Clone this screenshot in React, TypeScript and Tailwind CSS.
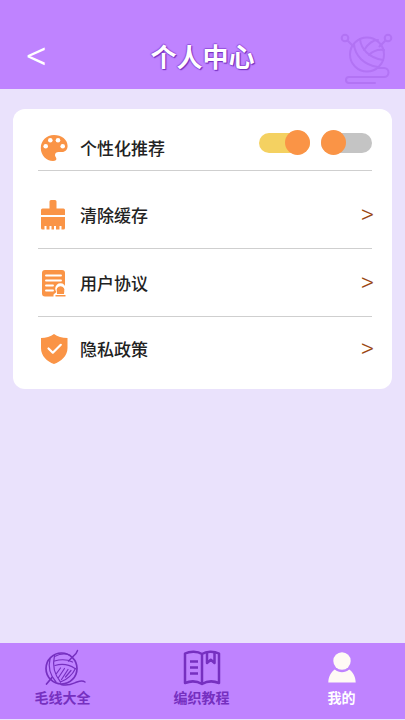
import type { ReactNode } from "react";

function KnittingMark() {
  return (
    <svg viewBox="0 0 54 54" className="w-[54px] h-[54px]" fill="none" stroke="#b273f4" strokeWidth="2" strokeLinecap="round" aria-hidden="true">
      <circle cx="5" cy="5" r="3.3" />
      <circle cx="48" cy="5" r="3.3" />
      <path d="M7.500 7.500l6 6M45.500 7.500l-6 6" />
      <circle cx="27" cy="21.500" r="17" />
      <path d="M20 6c1 10 9 19 23 21M14 11c1 12 10 21 24 23M24 17c4-6 9-10 14-10M29 22c4-4 9-6 15-5" />
      <path d="M38 35h6a4.500 4.500 0 0 1 0 9H9a3 3 0 0 0 0 6H35" />
    </svg>
  );
}

function PaletteIcon() {
  return (
    <svg viewBox="0 0 28 32" className="w-7 h-8" aria-hidden="true">
      <path fill="#fa9446" d="M14 3C6.500 3 .8 8.700.8 16S6.200 29 13 29c2.600 0 3.700-1 3.300-2.700-.3-1-1.300-2-1.300-3.300 0-2 1.500-3 3.500-3H22c3.200 0 5.600-2.300 5.600-6C27.600 7.500 21.500 3 14 3z" />
      <g fill="#fff">
        <circle cx="5.700" cy="14.300" r="2.300" />
        <circle cx="10.300" cy="8.300" r="2.300" />
        <circle cx="18" cy="8.300" r="2.300" />
        <circle cx="22.700" cy="14.300" r="2.300" />
      </g>
    </svg>
  );
}

function BrushIcon() {
  return (
    <svg viewBox="0 0 28 32" className="w-7 h-8" fill="#fa9446" aria-hidden="true">
      <path d="M9.500 9.500V2.500Q9.500 1 11 1H15Q16.500 1 16.500 2.500V9.500H23.500Q25 9.500 25 11V16H1V11Q1 9.500 2.500 9.500Z" />
      <path d="M1 18H25V29Q25 30.500 23.500 30.500H21.500V27H19.500V30.500H16V27H14V30.500H11.500V27H9.500V30.500H6.500V27H4.500V30.500H2.500Q1 30.500 1 29Z" />
    </svg>
  );
}

function AgreementIcon() {
  return (
    <svg viewBox="0 0 28 32" className="w-7 h-8" aria-hidden="true">
      <rect x="2" y="3" width="23" height="26.500" rx="3" fill="#fa9446" />
      <path d="M6 8.500H21M6 13.500H21M6 18.500H13M6 23.500H13" stroke="#fff" strokeWidth="1.900" strokeLinecap="round" />
      <path d="M13.500 32V27.500L16.500 25A5.300 5.300 0 1 1 24.500 25L27 27.500V32Z" fill="#fff" />
      <path d="M17 27V24.800A3.900 3.900 0 1 1 24 24.800V27ZM15.500 28H25.500V29.500H15.500Z" fill="#fa9446" />
    </svg>
  );
}

function ShieldIcon() {
  return (
    <svg viewBox="0 0 28 32" className="w-7 h-8" aria-hidden="true">
      <path fill="#fa9446" d="M14 1C17.500 3.800 22 4.800 27.500 5V15C27.500 23 21 28.500 14 31C7 28.500 1 23 1 15V5C6 4.800 10.500 3.800 14 1Z" />
      <path d="M8.500 15.500L12.800 19.700L20.800 11.800" fill="none" stroke="#fff" strokeWidth="2.200" strokeLinecap="round" strokeLinejoin="round" />
    </svg>
  );
}

function YarnIcon() {
  return (
    <svg viewBox="-3 0 44 38" className="w-11 h-[38px] overflow-visible" fill="none" stroke="#7630c0" strokeWidth="1.200" strokeLinecap="round" aria-hidden="true">
      <circle cx="17.500" cy="19.500" r="15.500" strokeWidth="1.700" />
      <path d="M33.500 1.500L32 4.500L24.500 12" strokeWidth="1.500" />
      <path d="M8 28.500L2.500 35" strokeWidth="1.700" />
      <path d="M10.500 6.500c-2 9-1 18 6 26.500M6 10c-2 8 0 16 6 23" />
      <path d="M10.500 7.500c7-3.500 12-3 16-1M10.500 12c7-2 13-1.500 18 1M11 16.500c7-2 14-1 20 3" />
      <path d="M31.500 19.500c-3 6-8 11-15 13.500" />
      <path d="M12.500 24.500l4-5.500M14.500 28.500l6-9M17.500 30.500l6.500-10M21.500 28l5.500-6.500" />
      <path d="M17 35.500c8 2 12-1 16-2.500s6-1.500 8 0" strokeWidth="1.400" />
    </svg>
  );
}

function BookIcon() {
  return (
    <svg viewBox="0 0 38 36" className="w-[38px] h-9" fill="none" stroke="#7630c0" strokeWidth="2.500" strokeLinejoin="round" aria-hidden="true">
      <path d="M19 4C14.500 1 7 1 2 3.500V33C7 31 14 31 19 34C24 31 31 31 36 33V3.500C31 1 23.500 1 19 4ZM19 4V34" />
      <path d="M7 11.500H15M7 17.500H15M7 23.500H15" />
      <path d="M24 2.500V13L27.800 9.800L31.500 13V2.500" />
    </svg>
  );
}

function PersonIcon() {
  return (
    <svg viewBox="0 0 28 32" className="w-7 h-8" fill="#fffaf5" aria-hidden="true">
      <circle cx="14" cy="9" r="8.700" />
      <path d="M.3 30.500C.5 24.500 3 20 6.800 17.500C11 21 17 21 21.200 17.500C25 20 27.500 24.500 27.700 30.500Z" />
    </svg>
  );
}

const toggleClass =
  "grid h-[25px] w-[51px] cursor-pointer appearance-none items-center before:col-start-1 before:row-start-1 before:h-5 before:w-full before:rounded-full before:bg-[#c4c4c4] before:content-[''] checked:before:bg-[#f4d161] after:col-start-1 after:row-start-1 after:size-[25px] after:rounded-full after:bg-[#fa9446] after:content-[''] checked:after:justify-self-end";

function LinkRow({ icon, label, className }: { icon: ReactNode; label: string; className: string }) {
  return (
    <a href="#" className={`flex items-center ${className}`}>
      <span className="pl-0.5">{icon}</span>
      <span className="flex-1 pl-3">{label}</span>
      <span className="-mr-0.5 pb-0.5 font-['Roboto',sans-serif] text-[26px] leading-6 font-light text-[#9a4712]">&gt;</span>
    </a>
  );
}

function Tab({ icon, label, className }: { icon: ReactNode; label: string; className: string }) {
  return (
    <a href="#" className={`flex flex-col items-center ${className}`}>
      <span className="flex h-[38px] items-center">{icon}</span>
      <span>{label}</span>
    </a>
  );
}

export default function App() {
  return (
    <div className="flex min-h-screen flex-col bg-[#eae2fc] font-['Noto_Sans_CJK_SC',sans-serif] text-[#222]">
      <header className="grid grid-cols-[1fr_auto_1fr] items-center bg-[#bf83ff] pt-[33px] pb-0.5">
        <button aria-label="返回" className="justify-self-start pb-2 pl-[26px] font-['Roboto',sans-serif] text-[42px] leading-10 font-light text-white">
          &lt;
        </button>
        <h1 className="pb-2 text-[26px] leading-9 font-bold text-white [text-shadow:1px_1px_1px_#7630c0,-1px_0_1px_#9450dd,0_-1px_1px_#9450dd,1px_1px_1px_#9450dd]">
          个人中心
        </h1>
        <span className="justify-self-end pr-[11px]">
          <KnittingMark />
        </span>
      </header>

      <main className="flex-1 px-[13px] py-5">
        <section className="rounded-xl bg-white pr-5 pl-[25px] text-[17px] leading-6 font-medium">
          <div className="flex h-[62px] items-center border-b border-[#cfcfcf] pt-4">
            <span className="pl-0.5">
              <PaletteIcon />
            </span>
            <span className="flex-1 pl-3">个性化推荐</span>
            <span className="flex gap-[11px] pb-2.5">
              <input type="checkbox" defaultChecked aria-label="开启个性化推荐" className={toggleClass} />
              <input type="checkbox" aria-label="关闭个性化推荐" className={toggleClass} />
            </span>
          </div>
          <LinkRow icon={<BrushIcon />} label="清除缓存" className="h-[78px] border-b border-[#cfcfcf] pt-2.5" />
          <LinkRow icon={<AgreementIcon />} label="用户协议" className="h-[68px] border-b border-[#cfcfcf]" />
          <LinkRow icon={<ShieldIcon />} label="隐私政策" className="h-[72px] pb-2" />
        </section>
      </main>

      <nav className="grid grid-cols-[125px_1fr_127px] border-b border-[#eae2fc] bg-[#bf83ff] pt-1.5 pb-3 text-sm leading-5 font-bold">
        <Tab icon={<YarnIcon />} label="毛线大全" className="text-[#7630c0]" />
        <Tab icon={<BookIcon />} label="编织教程" className="text-[#7630c0]" />
        <Tab icon={<PersonIcon />} label="我的" className="text-white" />
      </nav>
    </div>
  );
}
